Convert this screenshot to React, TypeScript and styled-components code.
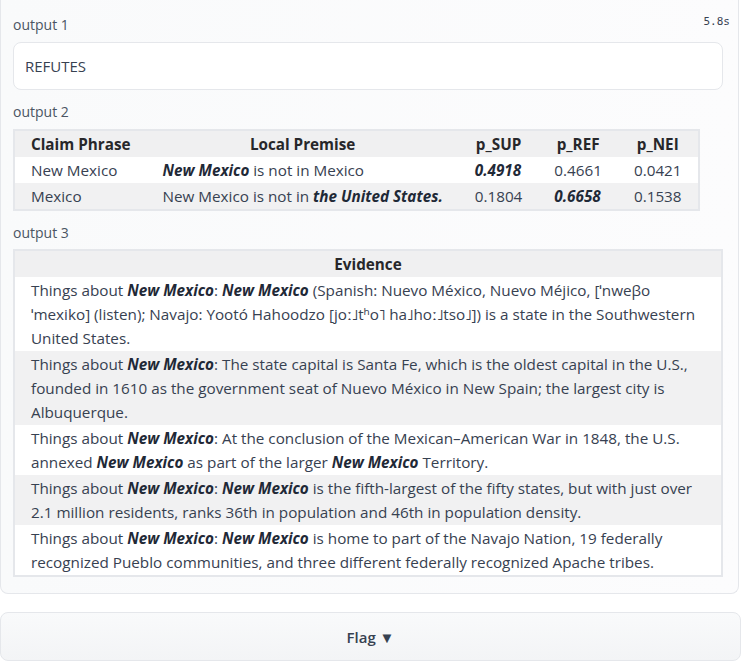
import React from "react";
import styled, { createGlobalStyle } from "styled-components";

const Global = createGlobalStyle`
  html, body { margin: 0; padding: 0; background: #ffffff; }
  body { font-family: "Open Sans", "Noto Sans", sans-serif; color: #374151; }
`;

const Page = styled.div`
  width: 742px;
  display: flex;
  flex-direction: column;
  gap: 18px;
`;

const Panel = styled.div`
  width: 739px;
  box-sizing: border-box;
  border: 1px solid #e5e7eb;
  border-top: none;
  border-radius: 0 0 8px 8px;
  background: linear-gradient(to right, #f9fafb, #fcfcfd);
  padding: 15px 15px 16px 12px;
  display: flex;
  flex-direction: column;
  gap: 12px;
  position: relative;
`;

const Timer = styled.span`
  position: absolute;
  right: 8px;
  top: 15px;
  font-family: "DejaVu Sans Mono", "Liberation Mono", monospace;
  font-size: 11px;
  color: #374151;
`;

const Section = styled.div`
  display: flex;
  flex-direction: column;
  align-items: flex-start;
`;

const Label = styled.div<{ $mb?: number }>`
  height: 20px;
  line-height: 20px;
  font-size: 14px;
  color: #4b5563;
  margin-bottom: ${(p) => p.$mb ?? 7}px;
`;

const TextBox = styled.div`
  width: 100%;
  box-sizing: border-box;
  height: 48px;
  background: #ffffff;
  border: 1px solid #e5e7eb;
  border-radius: 8px;
  padding: 0 11px;
  display: flex;
  align-items: center;
  font-size: 15px;
  color: #374151;
`;

const Table = styled.table<{ $full?: boolean }>`
  border-collapse: collapse;
  border: 2px solid #e5e7eb;
  width: ${(p) => (p.$full ? "100%" : "auto")};
  font-size: 15.25px;
  line-height: 24px;
  color: #374151;
`;

const Th = styled.th`
  background: #f0f0f1;
  font-weight: 700;
  color: #27272a;
  padding: 1px 16px;
  text-align: center;
  white-space: nowrap;
`;

const Tr = styled.tr<{ $even?: boolean }>`
  background: ${(p) => (p.$even ? "#f1f1f2" : "#ffffff")};
`;

const Td = styled.td<{ $nowrap?: boolean }>`
  padding: ${(p) => (p.$nowrap ? "1px 16px" : "1px 8px 1px 16px")};
  text-align: left;
  vertical-align: top;
  white-space: ${(p) => (p.$nowrap ? "nowrap" : "normal")};
`;

const Em = styled.b`
  font-style: italic;
  font-weight: 700;
  color: #1f2937;
`;

const FlagButton = styled.button`
  width: 741px;
  height: 49px;
  box-sizing: border-box;
  border: 1px solid #e5e7eb;
  border-radius: 8px;
  background: linear-gradient(to bottom, #f9fafb, #f3f4f6);
  font-family: "Open Sans", "Noto Sans", sans-serif;
  font-size: 15px;
  font-weight: 600;
  color: #374151;
  cursor: pointer;
`;

const NM = () => <Em>New Mexico</Em>;

const premises = [
  {
    phrase: "New Mexico",
    premise: (
      <>
        <NM /> is not in Mexico
      </>
    ),
    p: ["0.4918", "0.4661", "0.0421"],
    best: 0,
  },
  {
    phrase: "Mexico",
    premise: (
      <>
        New Mexico is not in <Em>the United States.</Em>
      </>
    ),
    p: ["0.1804", "0.6658", "0.1538"],
    best: 1,
  },
];

const evidence: React.ReactNode[] = [
  <>
    Things about <NM />: <NM /> (Spanish: Nuevo México, Nuevo Méjico, [ˈnweβo ˈmexiko] (listen); Navajo: Yootó
    Hahoodzo [joː˩tʰo˥ ha˩hoː˩tso˩]) is a state in the Southwestern United States.
  </>,
  <>
    Things about <NM />: The state capital is Santa Fe, which is the oldest capital in the U.S., founded in 1610 as the
    government seat of Nuevo México in New Spain; the largest city is Albuquerque.
  </>,
  <>
    Things about <NM />: At the conclusion of the Mexican–American War in 1848, the U.S. annexed <NM /> as part of the
    larger <NM /> Territory.
  </>,
  <>
    Things about <NM />: <NM /> is the fifth-largest of the fifty states, but with just over 2.1 million residents, ranks
    36th in population and 46th in population density.
  </>,
  <>
    Things about <NM />: <NM /> is home to part of the Navajo Nation, 19 federally recognized Pueblo communities, and
    three different federally recognized Apache tribes.
  </>,
];

export default function App() {
  return (
    <Page>
      <Global />
      <Panel>
        <Timer>5.8s</Timer>
        <Section>
          <Label>output 1</Label>
          <TextBox>REFUTES</TextBox>
        </Section>
        <Section>
          <Label>output 2</Label>
          <Table>
            <thead>
              <tr>
                <Th>Claim Phrase</Th>
                <Th>Local Premise</Th>
                <Th>p_SUP</Th>
                <Th>p_REF</Th>
                <Th>p_NEI</Th>
              </tr>
            </thead>
            <tbody>
              {premises.map((r, i) => (
                <Tr key={r.phrase} $even={i % 2 === 1}>
                  <Td $nowrap>{r.phrase}</Td>
                  <Td $nowrap>{r.premise}</Td>
                  {r.p.map((v, j) => (
                    <Td $nowrap key={j}>
                      {j === r.best ? <Em>{v}</Em> : v}
                    </Td>
                  ))}
                </Tr>
              ))}
            </tbody>
          </Table>
        </Section>
        <Section>
          <Label $mb={6}>output 3</Label>
          <Table $full>
            <thead>
              <tr>
                <Th>Evidence</Th>
              </tr>
            </thead>
            <tbody>
              {evidence.map((e, i) => (
                <Tr key={i} $even={i % 2 === 1}>
                  <Td>{e}</Td>
                </Tr>
              ))}
            </tbody>
          </Table>
        </Section>
      </Panel>
      <FlagButton>Flag ▼</FlagButton>
    </Page>
  );
}
